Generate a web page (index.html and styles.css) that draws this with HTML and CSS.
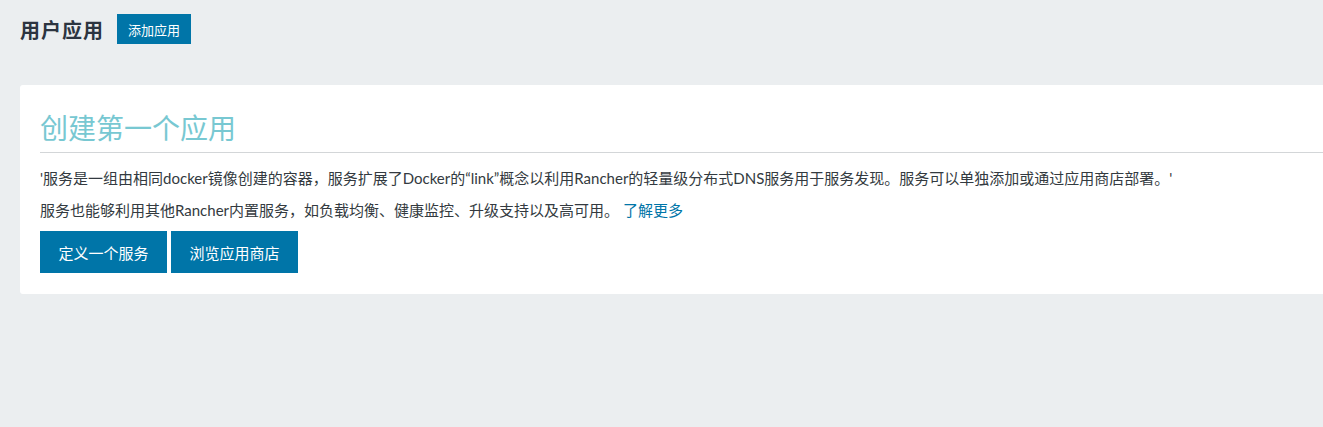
FILE: index.html
```html
<!DOCTYPE html>
<html lang="zh">
<head>
<meta charset="utf-8">
<link rel="stylesheet" href="styles.css">
</head>
<body>
<div class="page">
  <header class="header">
    <h1 class="header-title">用户应用</h1>
    <button class="btn btn-sm">添加应用</button>
  </header>
  <section class="card">
    <h2 class="card-title">创建第一个应用</h2>
    <p class="card-text">'服务是一组由相同docker镜像创建的容器，服务扩展了Docker的“link”概念以利用Rancher的轻量级分布式DNS服务用于服务发现。服务可以单独添加或通过应用商店部署。'</p>
    <p class="card-text">服务也能够利用其他Rancher内置服务，如负载均衡、健康监控、升级支持以及高可用。 <a class="link" href="#">了解更多</a></p>
    <div class="actions">
      <button class="btn btn-lg">定义一个服务</button>
      <button class="btn btn-lg">浏览应用商店</button>
    </div>
  </section>
</div>
</body>
</html>
```
FILE: styles.css
```css
html, body {
  margin: 0;
  padding: 0;
  background: #ebeef0;
  overflow: hidden;
}
body {
  font-family: Lato, "Noto Sans CJK SC", sans-serif;
  color: #333a40;
  font-size: 14px;
}
.page {
  padding: 14px 0 0 20px;
}
.header {
  display: flex;
  align-items: center;
  gap: 13px;
  height: 30px;
}
.header-title {
  margin: 0;
  font-size: 20px;
  font-weight: 700;
  color: #2c3440;
  letter-spacing: 1px;
}
.btn {
  border: none;
  background: #0075a8;
  color: #fff;
  font-family: Lato, "Noto Sans CJK SC", sans-serif;
  cursor: pointer;
  border-radius: 0;
}
.btn-sm {
  height: 30px;
  padding: 0 11px;
  font-size: 13px;
}
.card {
  margin-top: 41px;
  margin-right: -60px;
  background: #fff;
  border-radius: 3px;
  padding: 20px 20px 21px 20px;
}
.card-title {
  margin: 0;
  font-size: 28px;
  font-weight: 400;
  color: #78c8d2;
  line-height: 40px;
  padding: 3px 0 4px;
  border-bottom: 1px solid #d3d6d8;
}
.card-text {
  margin: 0;
  font-size: 15px;
  line-height: 20px;
  margin-top: 15px;
}
.card-text + .card-text {
  margin-top: 12px;
}
.link {
  color: #0075a8;
  text-decoration: none;
}
.actions {
  display: flex;
  gap: 4px;
  margin-top: 11px;
}
.btn-lg {
  height: 42px;
  width: 127px;
  font-size: 15px;
  padding: 0;
}
```
